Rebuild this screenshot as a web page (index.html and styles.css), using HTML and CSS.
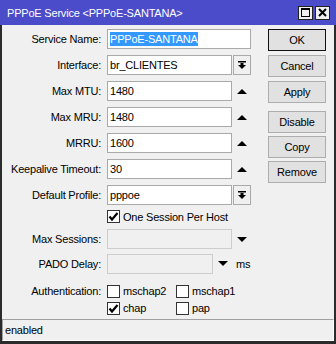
FILE: index.html
```html
<!DOCTYPE html>
<html lang="en">
<head>
  <meta charset="UTF-8">
  <title>PPPoE Service</title>
  <link rel="stylesheet" href="styles.css">
</head>
<body>
  <div class="window">
    <div class="titlebar">
      <span class="title">PPPoE Service &lt;PPPoE-SANTANA&gt;</span>
      <div class="wbtns">
        <span class="wbtn"><svg width="9" height="9" viewBox="0 0 9 9"><rect x="0.5" y="0.5" width="8" height="8" fill="none" stroke="#000"/><rect x="0" y="0" width="9" height="2" fill="#000"/></svg></span>
        <span class="wbtn"><svg width="9" height="9" viewBox="0 0 9 9"><path d="M1 1 L8 8 M8 1 L1 8" stroke="#000" stroke-width="2"/></svg></span>
      </div>
    </div>

    <div class="frame">
      <div class="main">
        <div class="form">
          <div class="row">
            <span class="label">Service Name:</span>
            <div class="input wide"><span class="sel">PPPoE-SANTANA</span></div>
          </div>
          <div class="row">
            <span class="label">Interface:</span>
            <div class="input">br_CLIENTES</div>
            <span class="dd"><svg width="8" height="8" viewBox="0 0 8 8"><rect x="0" y="0" width="8" height="1.5"/><rect x="2.5" y="2" width="3" height="2"/><polygon points="0,4 8,4 4,8"/></svg></span>
          </div>
          <div class="row">
            <span class="label">Max MTU:</span>
            <div class="input">1480</div>
            <span class="arrow"><svg width="10" height="5" viewBox="0 0 10 5"><polygon points="0,5 10,5 5,0"/></svg></span>
          </div>
          <div class="row">
            <span class="label">Max MRU:</span>
            <div class="input">1480</div>
            <span class="arrow"><svg width="10" height="5" viewBox="0 0 10 5"><polygon points="0,5 10,5 5,0"/></svg></span>
          </div>
          <div class="row">
            <span class="label">MRRU:</span>
            <div class="input">1600</div>
            <span class="arrow"><svg width="10" height="5" viewBox="0 0 10 5"><polygon points="0,5 10,5 5,0"/></svg></span>
          </div>
          <div class="row">
            <span class="label">Keepalive Timeout:</span>
            <div class="input">30</div>
            <span class="arrow"><svg width="10" height="5" viewBox="0 0 10 5"><polygon points="0,5 10,5 5,0"/></svg></span>
          </div>
          <div class="row">
            <span class="label">Default Profile:</span>
            <div class="input">pppoe</div>
            <span class="dd"><svg width="8" height="8" viewBox="0 0 8 8"><rect x="0" y="0" width="8" height="1.5"/><rect x="2.5" y="2" width="3" height="2"/><polygon points="0,4 8,4 4,8"/></svg></span>
          </div>
          <div class="row check-row">
            <span class="label"></span>
            <span class="check on"><svg width="11" height="11" viewBox="0 0 11 11"><path d="M1.5 5.5 L4 8.5 L9.5 2" fill="none" stroke="#000" stroke-width="2.2"/></svg></span>
            <span class="check-text">One Session Per Host</span>
          </div>
          <div class="row">
            <span class="label">Max Sessions:</span>
            <div class="input off"></div>
            <span class="arrow"><svg width="10" height="5" viewBox="0 0 10 5"><polygon points="0,0 10,0 5,5"/></svg></span>
          </div>
          <div class="row pado">
            <span class="label">PADO Delay:</span>
            <div class="input off short"></div>
            <span class="arrow"><svg width="10" height="5" viewBox="0 0 10 5"><polygon points="0,0 10,0 5,5"/></svg></span>
            <span class="unit">ms</span>
          </div>
          <div class="row auth">
            <span class="label">Authentication:</span>
            <div class="checks">
              <span class="opt"><span class="check"></span>mschap2</span>
              <span class="opt"><span class="check"></span>mschap1</span>
              <span class="opt"><span class="check on"><svg width="11" height="11" viewBox="0 0 11 11"><path d="M1.5 5.5 L4 8.5 L9.5 2" fill="none" stroke="#000" stroke-width="2.2"/></svg></span>chap</span>
              <span class="opt"><span class="check"></span>pap</span>
            </div>
          </div>
        </div>

        <div class="side">
          <div class="btn-group">
            <button class="btn default">OK</button>
            <button class="btn">Cancel</button>
            <button class="btn">Apply</button>
          </div>
          <div class="btn-group second">
            <button class="btn">Disable</button>
            <button class="btn">Copy</button>
            <button class="btn">Remove</button>
          </div>
        </div>
      </div>

      <div class="status">enabled</div>
    </div>
  </div>
</body>
</html>
```

FILE: styles.css
```css
body {
  margin: 0;
  font-family: "Liberation Sans", Arial, sans-serif;
  font-size: 11px;
  letter-spacing: -0.2px;
  color: #000;
  background: #f0f0f0;
}
.window {
  width: 336px;
  height: 344px;
  display: flex;
  flex-direction: column;
  background: #f0f0f0;
}
.titlebar {
  height: 25px;
  background: #4b4cc9;
  display: flex;
  align-items: center;
  justify-content: space-between;
  padding: 0 6px 0 7px;
  flex-shrink: 0;
}
.title {
  color: #fff;
  font-size: 11px;
  padding-top: 1px;
}
.wbtns {
  display: flex;
  gap: 2px;
}
.wbtn {
  width: 15px;
  height: 14px;
  box-sizing: border-box;
  background: #f0f0f0;
  border: 1px solid #222;
  display: flex;
  align-items: center;
  justify-content: center;
}
.frame {
  flex: 1;
  display: flex;
  flex-direction: column;
  border: solid #2b2b2b;
  border-width: 0 2px 3px 2px;
}
.main {
  display: flex;
}
.form {
  width: 260px;
  padding-top: 1px;
}
.row {
  display: flex;
  align-items: center;
  height: 26px;
}
.label {
  width: 99px;
  margin-right: 6px;
  text-align: right;
  flex-shrink: 0;
}
.input {
  width: 125px;
  height: 20px;
  box-sizing: border-box;
  border: 1px solid #a9a9a9;
  background: #fff;
  padding: 0 2px;
  line-height: 18px;
  white-space: nowrap;
}
.input.wide {
  width: 144px;
}
.input.off {
  background: #f0f0f0;
  border-color: #cdcdcd;
}
.input.short {
  width: 106px;
}
.sel {
  background: #3399ff;
  color: #fff;
  padding: 1px 0;
}
.dd {
  width: 18px;
  height: 20px;
  box-sizing: border-box;
  margin-left: 1px;
  border: 1px solid #a9a9a9;
  background: #f0f0f0;
  display: flex;
  align-items: center;
  justify-content: center;
}
.arrow {
  width: 19px;
  display: flex;
  justify-content: center;
}
.unit {
  margin-left: 4px;
}
.check-row {
  height: 19px;
  margin-top: -1px;
}
.check {
  width: 13px;
  height: 13px;
  box-sizing: border-box;
  border: 1px solid #333;
  background: #fff;
  display: inline-flex;
  align-items: center;
  justify-content: center;
  margin-right: 3px;
  flex-shrink: 0;
}
.pado {
  height: 23px;
}
.auth {
  height: auto;
  align-items: flex-start;
  margin-top: 7px;
}
.auth .label {
  line-height: 18px;
}
.checks {
  display: grid;
  grid-template-columns: 69px 69px;
  grid-template-rows: 18px 16px;
}
.opt {
  display: flex;
  align-items: center;
}
.side {
  margin-left: 6px;
  padding-top: 4px;
  display: flex;
  flex-direction: column;
  gap: 8px;
}
.btn-group {
  display: flex;
  flex-direction: column;
  gap: 4px;
}
.btn-group.second {
  gap: 3px;
}
.btn {
  width: 58px;
  height: 22px;
  padding: 0;
  font-family: "Liberation Sans", Arial, sans-serif;
  font-size: 11px;
  letter-spacing: -0.2px;
  color: #000;
  background: #e1e1e1;
  border: 1px solid #adadad;
}
.btn.default {
  border-color: #111;
}
.status {
  margin-top: auto;
  height: 22px;
  box-sizing: border-box;
  border: 1px solid;
  border-color: #a0a0a0 #fff #fff #a0a0a0;
  padding-left: 2px;
  line-height: 20px;
}
```
